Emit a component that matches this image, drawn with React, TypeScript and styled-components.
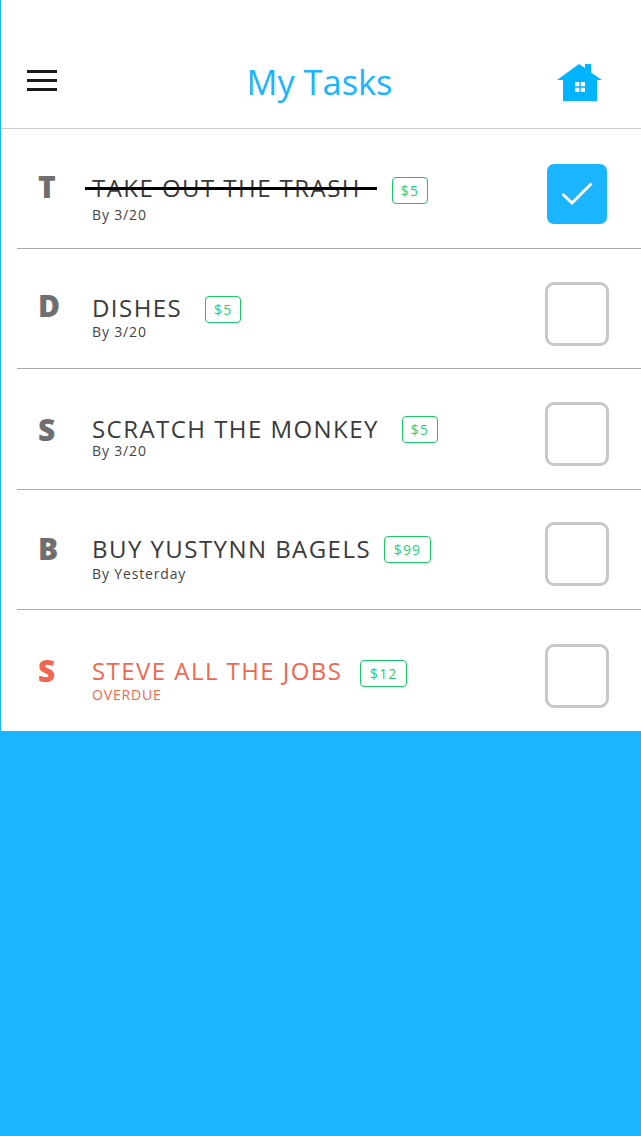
import React from 'react';
import styled, { createGlobalStyle } from 'styled-components';

const GlobalStyle = createGlobalStyle`
    html, body {
        margin: 0;
        padding: 0;
        background: #1ab4ff;
    }
    body {
        font-family: "Open Sans", "Liberation Sans", sans-serif;
    }
`;

const Page = styled.div`
    width: 641px;
    min-height: 1136px;
    background: #1ab4ff;
    display: flex;
    flex-direction: column;
`;

const Sheet = styled.div`
    margin-left: 1px;
    background: #fff;
    display: flex;
    flex-direction: column;
`;

const Header = styled.header`
    height: 129px;
    box-sizing: border-box;
    border-bottom: 1px solid #ccc;
    display: flex;
    align-items: center;
    justify-content: space-between;
    padding: 36px 39px 0 26px;
`;

const MenuButton = styled.div`
    width: 30px;
    display: flex;
    flex-direction: column;
    gap: 6px;
    margin-bottom: 3px;
`;

const MenuBar = styled.span`
    display: block;
    height: 3px;
    background: #1a1a1a;
`;

const Title = styled.h1`
    margin: 0 0 0 25px;
    font-size: 34.4px;
    font-weight: 400;
    line-height: 48px;
    color: #1ab4ff;
`;

const List = styled.div`
    display: flex;
    flex-direction: column;
`;

const Row = styled.div<{ $height: number; $last?: boolean }>`
    position: relative;
    height: ${({ $height }) => $height}px;
    margin-left: 16px;
    box-sizing: border-box;
    display: flex;
    align-items: flex-start;
    border-bottom: ${({ $last }) => ($last ? 'none' : '1px solid #aaa')};
`;

const Letter = styled.div<{ $top: number; $overdue?: boolean }>`
    width: 75px;
    padding: ${({ $top }) => $top}px 0 0 21px;
    box-sizing: border-box;
    font-size: 30px;
    line-height: 40px;
    font-weight: 800;
    color: ${({ $overdue }) => ($overdue ? '#f26650' : '#6f6f6f')};
`;

const Body = styled.div<{ $top: number }>`
    flex: 1;
    padding-top: ${({ $top }) => $top}px;
`;

const TitleLine = styled.div`
    display: flex;
    align-items: flex-start;
`;

const TaskName = styled.span<{ $overdue?: boolean }>`
    font-size: 24px;
    line-height: 32px;
    letter-spacing: 1.45px;
    color: ${({ $overdue }) => ($overdue ? '#f26650' : '#3a3a3a')};
`;

const Price = styled.span<{ $width: number; $left: number; $top: number }>`
    width: ${({ $width }) => $width}px;
    height: 27px;
    box-sizing: border-box;
    border: 1px solid #19c767;
    border-radius: 4px;
    display: flex;
    align-items: center;
    justify-content: center;
    font-size: 14px;
    letter-spacing: 1.2px;
    color: #2ccb74;
    margin: ${({ $top }) => $top}px 0 0 ${({ $left }) => $left}px;
`;

const Due = styled.div<{ $overdue?: boolean; $gap: number }>`
    margin-top: ${({ $gap }) => $gap}px;
    font-size: 14px;
    line-height: 18px;
    letter-spacing: 0.85px;
    color: ${({ $overdue }) => ($overdue ? '#f26650' : '#444')};
`;

const Strike = styled.div`
    position: absolute;
    left: 68px;
    top: 58px;
    width: 292px;
    height: 3px;
    background: #000;
`;

const Check = styled.div<{ $top: number; $checked?: boolean }>`
    width: 64px;
    height: 64px;
    box-sizing: border-box;
    margin: ${({ $top }) => $top}px 32px 0 0;
    border: ${({ $checked }) => ($checked ? '2px solid #fff' : '3px solid #c8c8c8')};
    border-radius: 9px;
    background: ${({ $checked }) => ($checked ? '#1ab4ff' : '#fff')};
    display: flex;
    align-items: center;
    justify-content: center;
`;

const HomeIcon = () => (
    <svg width="45" height="37" viewBox="0 0 45 37">
        <path
            fill="#00b4ff"
            fillRule="evenodd"
            d="M0 16 L22 0 L28 4 V0 H34 V8.5 L45 16 H40 V37 H6 V16 Z M18 18 V28 H28 V18 Z"
        />
        <path fill="#00b4ff" d="M22.3 18 h1.4 v10 h-1.4 z M18 22.3 h10 v1.4 h-10 z" />
    </svg>
);

const CheckIcon = () => (
    <svg width="32" height="26" viewBox="0 0 32 26">
        <path d="M1.5 13 L11 22 L30.5 2.5" fill="none" stroke="#fff" strokeWidth="3" />
    </svg>
);

type Task = {
    letter: string;
    name: string;
    price: string;
    priceWidth: number;
    priceLeft: number;
    priceTop: number;
    due: string;
    height: number;
    letterTop: number;
    bodyTop: number;
    dueGap: number;
    checkTop: number;
    done?: boolean;
    overdue?: boolean;
};

const tasks: Task[] = [
    { letter: 'T', name: 'TAKE OUT THE TRASH', price: '$5', priceWidth: 36, priceLeft: 31, priceTop: 5, due: 'By 3/20', height: 120, letterTop: 38, bodyTop: 43, dueGap: 2, checkTop: 33, done: true },
    { letter: 'D', name: 'DISHES', price: '$5', priceWidth: 36, priceLeft: 23, priceTop: 4, due: 'By 3/20', height: 120, letterTop: 37, bodyTop: 43, dueGap: -1, checkTop: 33 },
    { letter: 'S', name: 'SCRATCH THE MONKEY', price: '$5', priceWidth: 36, priceLeft: 23, priceTop: 3, due: 'By 3/20', height: 121, letterTop: 41, bodyTop: 44, dueGap: -3, checkTop: 33 },
    { letter: 'B', name: 'BUY YUSTYNN BAGELS', price: '$99', priceWidth: 47, priceLeft: 13, priceTop: 3, due: 'By Yesterday', height: 120, letterTop: 39, bodyTop: 43, dueGap: 0, checkTop: 32 },
    { letter: 'S', name: 'STEVE ALL THE JOBS', price: '$12', priceWidth: 47, priceLeft: 18, priceTop: 5, due: 'OVERDUE', height: 121, letterTop: 41, bodyTop: 45, dueGap: -1, checkTop: 34, overdue: true },
];

const App: React.FC = () => {
    return (
        <Page>
            <GlobalStyle />
            <Sheet>
                <Header>
                    <MenuButton>
                        <MenuBar />
                        <MenuBar />
                        <MenuBar />
                    </MenuButton>
                    <Title>My Tasks</Title>
                    <HomeIcon />
                </Header>
                <List>
                    {tasks.map((task, idx) => (
                        <Row key={task.name} $height={task.height} $last={idx === tasks.length - 1}>
                            <Letter $top={task.letterTop} $overdue={task.overdue}>
                                {task.letter}
                            </Letter>
                            <Body $top={task.bodyTop}>
                                <TitleLine>
                                    <TaskName $overdue={task.overdue}>{task.name}</TaskName>
                                    <Price $width={task.priceWidth} $left={task.priceLeft} $top={task.priceTop}>
                                        {task.price}
                                    </Price>
                                </TitleLine>
                                <Due $overdue={task.overdue} $gap={task.dueGap}>
                                    {task.due}
                                </Due>
                            </Body>
                            {task.done && <Strike />}
                            <Check $top={task.checkTop} $checked={task.done}>
                                {task.done && <CheckIcon />}
                            </Check>
                        </Row>
                    ))}
                </List>
            </Sheet>
        </Page>
    );
};

export default App;
